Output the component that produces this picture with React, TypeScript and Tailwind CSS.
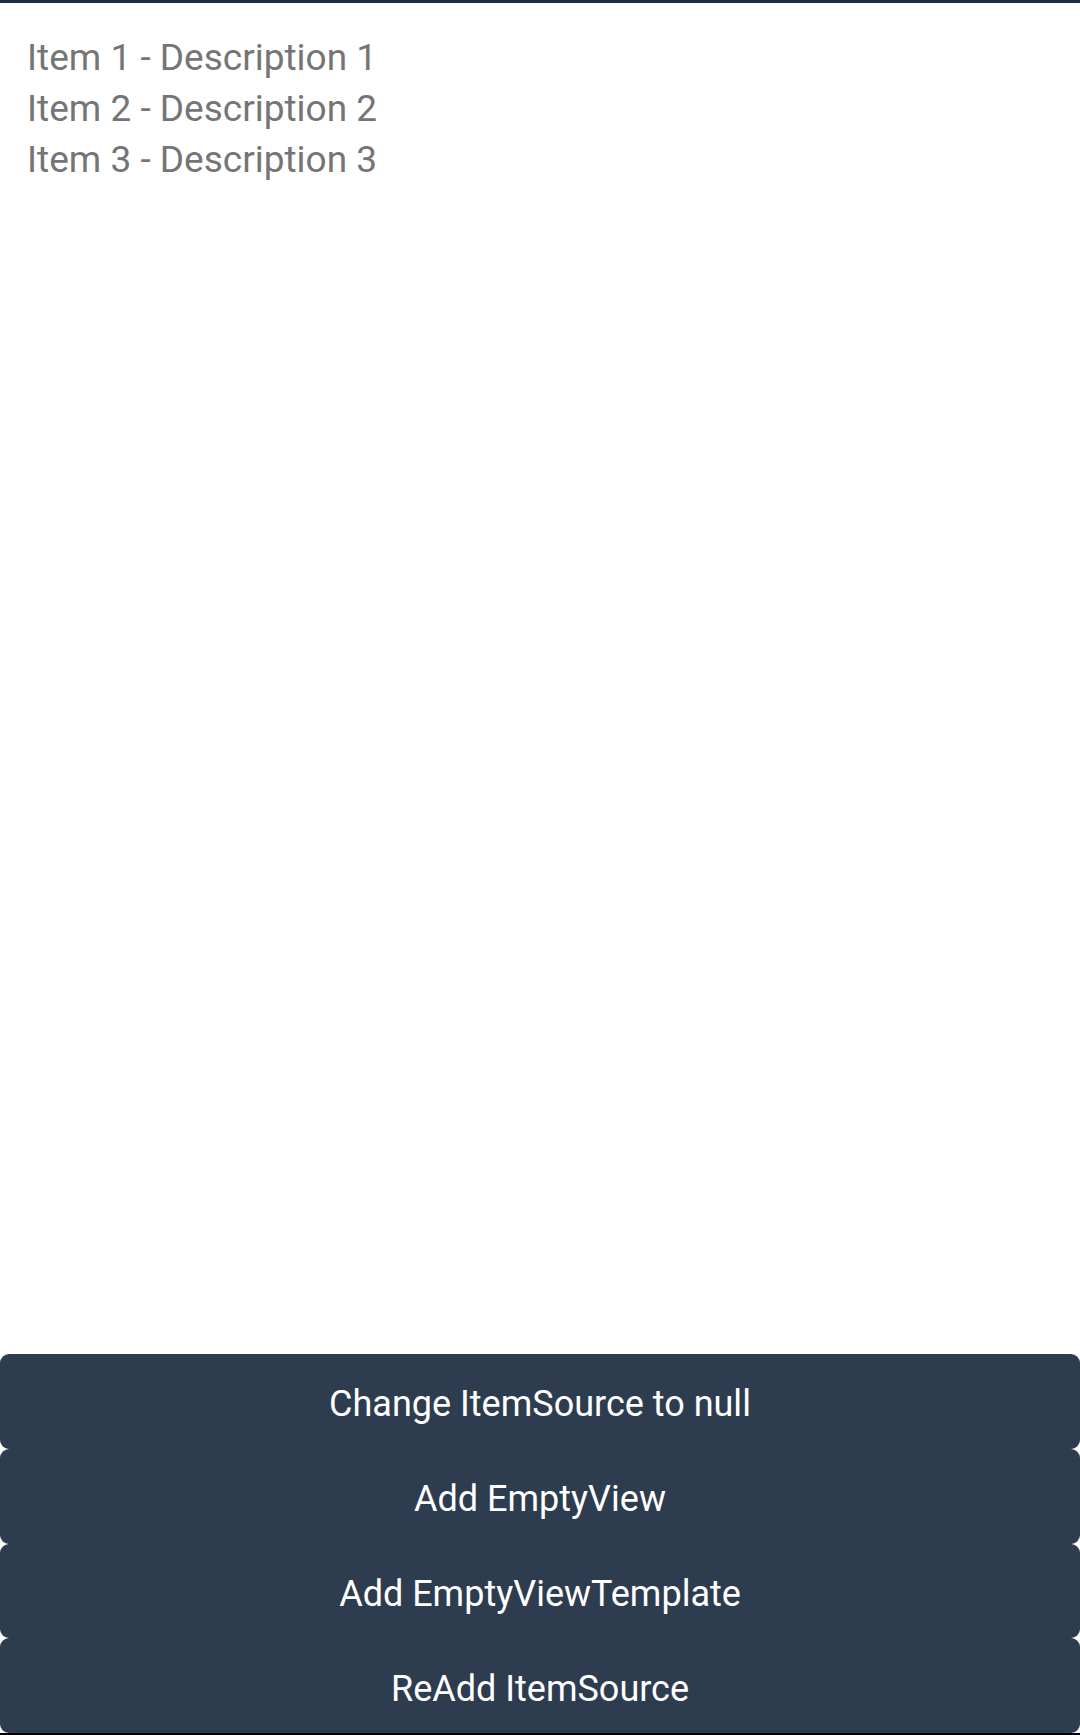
import React from "react";

const items = [
  { name: "Item 1", desc: "Description 1" },
  { name: "Item 2", desc: "Description 2" },
  { name: "Item 3", desc: "Description 3" },
];

const actions = [
  "Change ItemSource to null",
  "Add EmptyView",
  "Add EmptyViewTemplate",
  "ReAdd ItemSource",
];

export default function App() {
  return (
    <div className="flex flex-col h-[1735px] w-[1080px] bg-white font-['Roboto',sans-serif]">
      <div className="h-[3px] bg-[#1b2b42]" />
      <div className="flex-1 pt-[29px] pl-[27px]">
        {items.map(it => (
          <div key={it.name} className="text-[37px] leading-[51px] text-[#757575]">
            {it.name} - {it.desc}
          </div>
        ))}
      </div>
      <div className="flex flex-col">
        {actions.map(label => (
          <button
            key={label}
            type="button"
            className="h-[94.75px] w-full rounded-[9px] bg-[#2d3d4f] pt-[6px] text-white text-[36px]"
          >
            {label}
          </button>
        ))}
      </div>
      <div className="h-[2px] bg-black" />
    </div>
  );
}
